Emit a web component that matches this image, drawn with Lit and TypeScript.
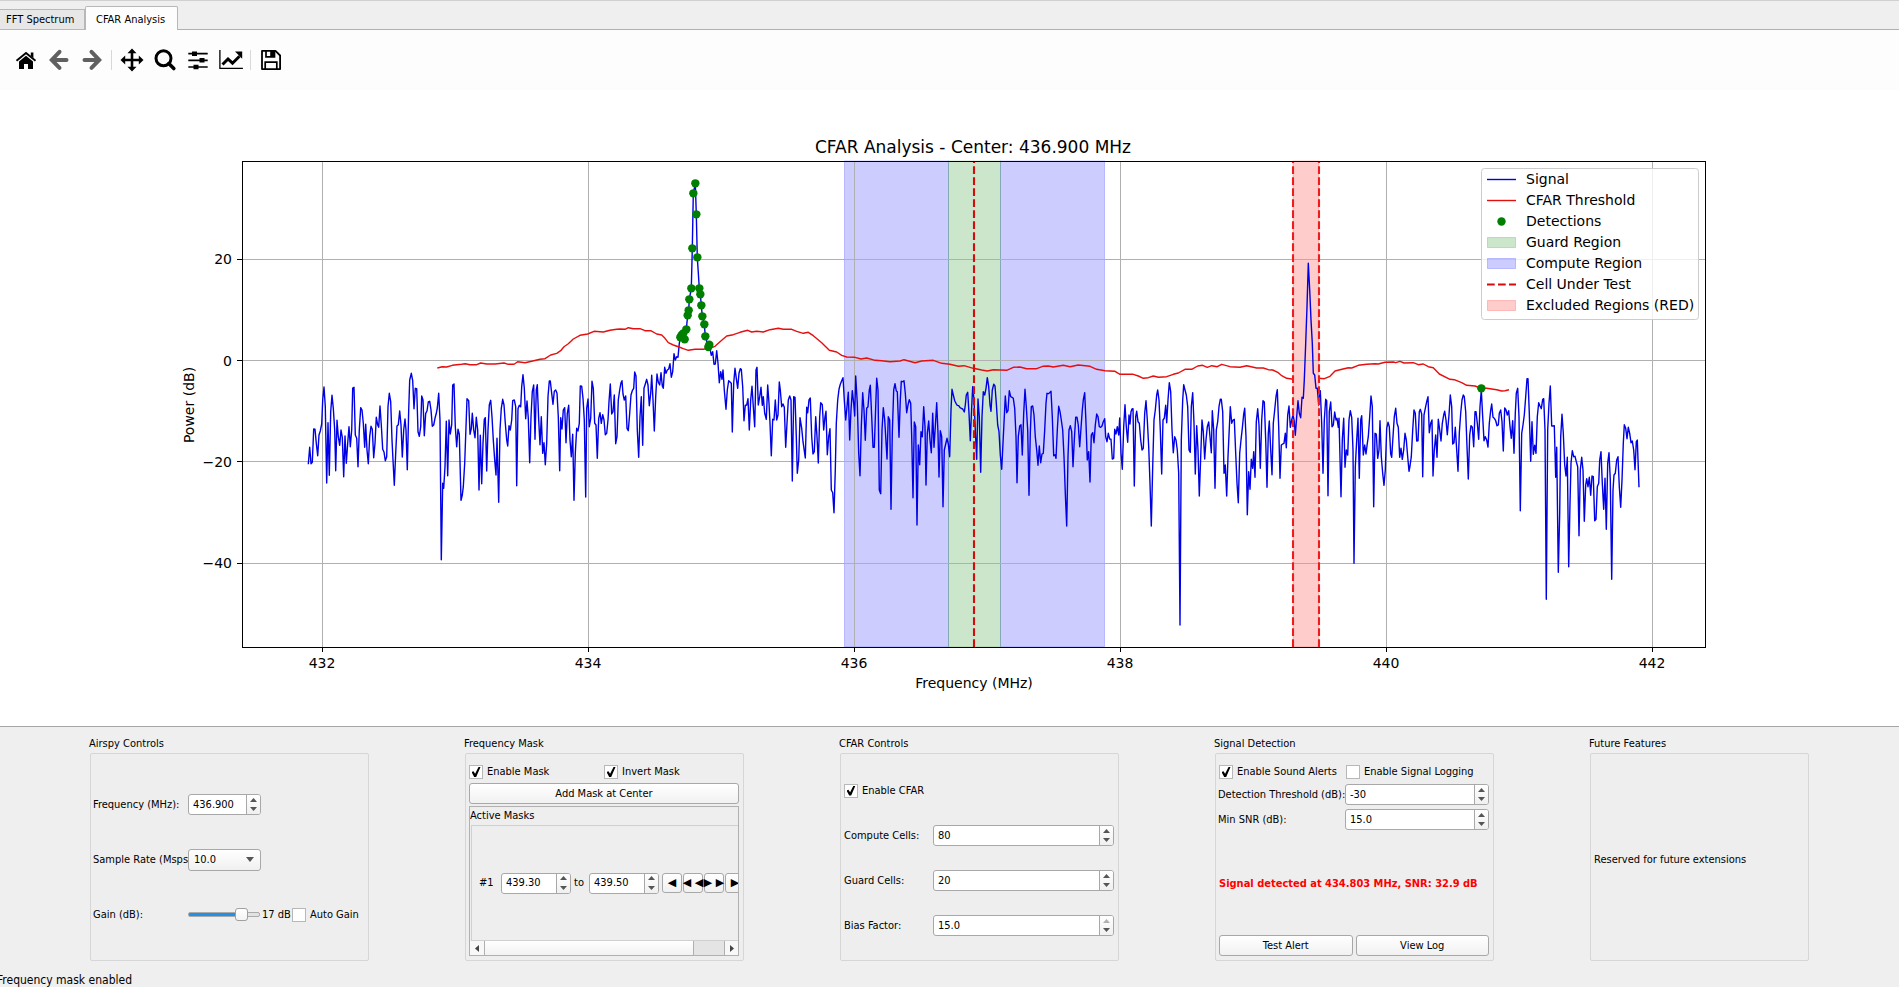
import { LitElement, html, svg, css, nothing } from "lit";
import { customElement, state } from "lit/decorators.js";

/* Traces are stored in sections; each section has an origin and points in thirds of a pixel. */
type Section = { x: number; y: number; pts: string };

const SIGNAL: Section[] = [
  { x: 290, y: 330, pts: "55,403 59,352 63,401 67,397 71,297 75,298 79,340 83,377 87,315 91,303 95,282 98,210 102,171 106,230 110,459 114,278 118,436 122,245 126,196 130,235 134,300 137,422 141,271 145,320 149,346 153,300 157,322 161,440 165,318 169,400 173,340 177,290 181,350 185,300 188,174 192,172 196,315 200,325 204,410 208,300 212,233 216,240 220,280 224,352 227,283 231,360 235,401 239,320 243,289 247,298 251,383 255,340 259,262 263,285 266,292 270,228 274,285 278,358 282,366 286,392 290,380 294,230 298,190 302,215 306,330 309,390 313,466 317,370 321,288 325,284 329,243 333,285 337,381 341,300 345,267 348,300 352,419 356,240 359,150 364,130 368,152 372,236 376,175 380,176 384,305 388,319 392,290 395,198 399,210 403,317 407,250 411,243 415,216 419,214 423,240 427,289 431,285 435,265 439,250 442,234 446,190 450,270 454,689 458,460 461,475 465,410 469,274 473,437 477,270 481,312 485,285 488,165 492,162 496,290 500,350 504,298 508,313 513,511 517,495 520,470 524,400 528,290 531,206 536,212 540,313 544,296 547,250 551,300 555,323 559,262 563,300 567,480 571,316 575,461 579,340 583,268 586,263 590,423 594,300 598,225 602,211 606,260 610,330 614,390 618,435 621,325 626,517 630,300 634,235 638,208 642,225 646,280 650,330 653,348 657,287 661,300 665,270 668,212 673,210 677,230 680,467 684,236 688,226 692,230 695,170 699,134 703,175 707,266 711,213 715,265 719,398 723,260 727,185 731,165 735,328 739,180 742,164 746,270 750,344 754,260 758,370 762,338 766,404 770,340 774,200 778,153 781,153 785,190 789,223 793,184 797,180 801,190 805,260 809,422 812,263 816,297 820,240 824,233 828,338 832,250 836,226 840,330 844,380 848,313 852,511 856,370 860,295 864,303 868,280 871,168 875,169 879,205 883,270 887,501 890,235 894,207 898,290 902,265 906,154 910,175 914,280 918,285 922,385 926,265 930,248 934,280 938,254 942,270 946,314 950,310 954,270 957,215 961,162 965,252 969,245 973,195 977,341 981,320 985,210 989,180" },
  { x: 620, y: 170, pts: "3,638 6,632 9,672 13,690 17,678 21,775 25,782 29,730 33,675 37,662 41,655 44,606 48,618 52,780 56,862 60,740 64,680 68,826 72,655 76,642 80,628 84,645 88,707 92,670 95,616 99,690 103,783 107,680 111,612 115,637 119,645 123,608 127,648 130,655 134,592 138,610 142,600 146,597 150,581 154,622 158,605 162,551 166,570 170,560 174,562 178,520 182,500 186,490 190,495 194,508 199,478 203,436 206,421 208,388 214,355 217,235 220,70 226,40 229,133 232,262 238,355 241,373 244,406 247,439 253,463 256,499 265,530 270,535 274,556 278,545 282,583 286,582 290,542 294,580 298,638 302,605 306,628 309,600 313,660 318,718 322,660 326,632 330,636 334,640 337,786 341,640 345,595 349,625 353,655 357,610 361,596 364,598 368,650 372,752 376,706 380,705 384,686 388,780 392,690 396,649 400,710 404,770 408,600 411,592 415,705 419,680 423,652 427,706 430,680 434,730 439,748 443,645 447,700 450,760 454,857 458,748 462,750 466,690 470,750 474,735 478,636 481,660 485,710 489,702 493,712 497,832 501,760 505,690 509,678 513,690 517,933 521,680 525,682 529,800 532,910 536,870 540,743 545,775 549,815 556,864 560,712 563,728 567,690 571,684 575,800 579,852 583,845 587,740 591,800 595,879 599,740 602,698 607,704 611,780 615,740 618,724 622,854 626,800 630,776 634,960 638,968 642,1028 646,900 649,760 653,690 657,658" },
  { x: 840, y: 340, pts: "1,133 5,122 9,113 13,180 17,240 21,200 25,157 29,300 33,210 37,152 41,190 44,228 47,108 52,190 56,340 60,407 64,260 68,158 72,210 76,301 80,205 84,200 88,150 91,136 95,230 99,322 103,322 107,200 110,115 114,150 118,450 122,461 126,270 130,203 134,240 137,290 141,357 145,230 149,240 153,508 157,280 161,150 165,131 169,153 172,155 177,292 181,180 184,124 188,125 192,122 196,160 200,218 204,195 208,179 212,190 215,290 219,473 223,246 227,260 231,555 235,315 239,374 243,275 247,290 251,200 255,260 258,435 262,280 266,243 270,300 274,338 278,220 282,322 286,260 290,188 294,280 297,411 301,272 305,290 309,500 313,330 317,312 321,295 325,312 329,350 333,210 336,148 340,165 344,182 348,190 352,196 356,197 360,203 364,205 368,207 373,216 376,195 379,165 383,157 387,220 391,302 395,200 398,140 402,180 406,270 410,358 414,177 418,230 422,397 426,230 430,155 434,165 438,145 442,113 446,140 450,195 453,214 457,150 461,133 465,138 469,190 473,255 477,275 481,345 485,388 489,310 493,230 496,168 500,218 504,212 508,152 512,170 516,172 520,175 524,205 528,290 531,428 535,290 539,258 543,254 547,345 551,220 555,148 559,200 563,270 567,466 571,280 574,200 578,198 582,225 586,290 590,330 594,376 598,318 602,368 606,342 610,340 614,270 618,190 621,160 625,161 629,158 633,154 637,230 641,347 645,344 648,355 652,270 656,199 660,215 664,240 668,270 672,350 676,460 680,558 684,350 687,270 691,257 695,275 699,380 703,300 707,232 711,232 715,255 719,320 723,265 727,210 730,180 734,158 738,250 742,360 746,335 750,426 754,285 758,278 762,308 766,255 770,222 774,230 778,260 782,262 786,258 790,245 794,236 797,290 801,305 805,280 809,297 813,298 817,357 821,355 824,268 828,282 832,260 836,285 839,234 843,340 847,388 851,260 855,194 859,260 863,307 867,225" },
  { x: 1130, y: 340, pts: "0,252 3,215 6,207 9,206 13,438 17,230 20,214 24,245 28,250 32,300 36,330 40,325 44,220 48,182 52,240 56,320 60,430 64,558 68,380 72,240 76,210 80,165 83,150 87,180 91,270 95,402 99,240 103,235 107,196 110,248 114,180 118,128 122,155 126,270 130,338 134,290 138,300 142,330 146,400 150,855 154,300 158,180 161,134 165,150 169,165 173,200 177,330 181,337 184,200 188,158 192,250 196,402 200,257 204,330 208,468 212,350 216,240 220,275 224,357 228,300 232,260 236,246 240,290 244,338 247,212 251,270 255,445 259,270 263,245 267,200 271,178 274,178 278,215 282,400 286,375 290,468 294,350 298,265 301,200 305,250 309,240 313,238 317,340 321,430 325,488 329,340 333,300 337,265 341,222 344,205 348,290 352,524 356,395 360,448 364,358 368,385 371,335 375,412 379,245 383,206 387,255 391,385 395,240 399,182 403,186 407,300 411,442 415,280 418,243 422,330 426,404 430,250 434,210 438,170 442,149 446,260 450,415 454,315 458,312 462,310 466,280 469,323 473,225 477,198 481,262 485,240 489,225 493,245 496,286 500,230 504,182 508,220 512,233 516,172 520,175 523,120 527,10 531,-100 535,-230 539,-150 543,-60 547,10 550,100 554,105 558,145 562,145 566,195 571,152 575,250 579,400 583,240 587,178 590,182 594,467 598,215 602,186 606,260 610,255 614,216 618,240 621,235 625,262 627,235 633,470 637,300 641,235 645,382 649,330 653,345 657,240 661,212 665,232 669,330 672,670 676,380 680,300 684,235 688,415 692,240 695,227 700,345 704,315 708,342 712,310 715,290 719,230 723,168 727,200 731,500 735,280 739,282 743,355 747,330 750,242 754,350 758,400 762,436 766,390 770,265 774,247 778,260 782,342 785,352 789,290 793,230 797,205 801,250 805,262 809,352 813,325 817,358 821,330 825,280 829,300 833,350 837,394 840,378 844,350 848,270 852,210 856,220 860,303 864,302" },
  { x: 1400, y: 340, pts: "58,215 61,208 65,222 68,410 72,225 76,205 80,185 84,170 88,278 92,250 96,240 99,408 103,330 107,285 111,352 115,238 119,270 123,303 127,250 131,225 134,214 138,240 142,284 147,225 151,165 155,200 158,312 162,308 166,262 170,330 174,394 178,280 182,220 186,180 190,165 193,170 197,215 201,320 205,417 209,285 213,257 217,262 221,320 225,215 228,215 232,250 236,298 240,200 244,150 248,230 252,302 256,290 260,300 264,321 268,250 272,210 275,192 279,232 283,235 287,242 291,257 295,255 298,220 302,210 306,245 310,333 314,204 318,210 322,225 326,212 330,260 334,295 338,242 342,340 346,220 349,160 353,145 357,230 361,512 365,280 369,255 373,225 377,170 381,116 384,116 388,220 392,364 396,245 400,343 404,316 408,340 412,230 416,188 420,198 424,206 428,178 431,176 435,270 439,778 443,270 447,190 451,138 455,258 459,258 463,257 467,412 470,322 475,697 479,520 482,290 486,223 490,280 494,375 498,408 502,352 506,680 510,490 513,370 517,332 521,350 525,349 529,365 533,380 537,587 541,390 545,352 549,390 553,544 557,435 560,416 564,440 568,412 572,466 576,408 580,410 584,542 588,538 592,440 596,430 599,360 603,335 607,430 611,508 615,415 619,568 623,370 627,338 631,420 635,718 639,450 642,405 646,400 650,360 654,350 658,440 662,502 666,420 670,310 673,254 677,265 681,296 685,262 689,280 693,308 697,303 701,330 705,389 709,305 712,300 717,442" },
];

const THRESHOLD_LOW: Section[] = [
  { x: 290, y: 330, pts: "442,114 457,110 470,111 487,106 500,104 515,103 526,101 540,104 560,104 572,99 590,102 615,102 642,99 655,103 672,103 683,95 705,98 725,94 750,88 765,86 782,75 800,70 812,62 822,50 835,41 850,27 870,16 893,12 912,4 940,6 960,1 980,-2" },
  { x: 620, y: 170, pts: "0,477 15,478 25,473 40,476 60,476 75,482 92,482 110,492 125,495 135,505 145,518 160,525 177,531 190,536 205,541 225,538 250,538 268,535 285,529 300,515 320,498 340,494 360,487 383,481 395,486 410,484 430,486 450,479 475,475 490,478 515,478 530,484 550,490 565,487 580,497 605,518 628,541 650,546" },
  { x: 840, y: 340, pts: "5,46 20,51 45,52 63,57 80,54 105,61 125,62 150,65 180,63 192,59 225,68 245,63 280,61 305,70 330,73 355,79 372,77 400,85 425,90 442,93 460,89 500,91 520,82 540,81 560,86 590,86 608,79 625,78 640,81 670,76 690,80 715,75 750,79 770,88 795,92 825,94 840,103 865,103" },
  { x: 1130, y: 340, pts: "10,103 25,108 40,115 55,113 70,108 85,112 110,110 130,103 145,99 165,88 185,88 203,78 218,76 232,82 245,77 262,80 275,73 300,80 330,82 350,77 380,84 400,84 415,89 428,90 445,98 455,107 470,115 490,118" },
];

const THRESHOLD_HIGH: Section[] = [
  { x: 1130, y: 340, pts: "567,115 583,116 600,109 615,93 630,89 655,83 665,84 685,76 710,73 735,71 745,72 765,67 790,66 797,68" },
  { x: 1400, y: 340, pts: "0,64 12,69 40,68 55,74 70,72 85,80 100,83 118,102 150,118 163,119 185,128 200,136 225,138 244,145 260,145 290,149 305,153 315,152 327,149" },
];

const DETECTIONS: Section[] = [
  { x: 620, y: 170, pts: "226,40 220,70 229,133 217,235 232,262 214,355 238,355 241,373 208,388 244,406 206,421 203,436 247,439 253,463 199,478 256,499 181,502 185,495 190,490 194,508 268,524 265,531" },
  { x: 1400, y: 340, pts: "244,145" },
];

const points = (sections: Section[]): [number, number][] =>
  sections.flatMap((s) =>
    s.pts.split(" ").map((p): [number, number] => {
      const [x, y] = p.split(",").map(Number);
      return [s.x + x / 3, s.y + y / 3];
    })
  );

const line = (sections: Section[]) =>
  points(sections).map(([x, y]) => `${x.toFixed(1)},${y.toFixed(1)}`).join(" ");

const AX = { left: 242, right: 1706, top: 161, bottom: 647 };
const xOf = (mhz: number) => 322 + (mhz - 432) * 133;
const yOf = (db: number) => 360.5 - db * 5.07;

@customElement("cfar-plot")
export class CfarPlot extends LitElement {
  static styles = css`
    :host { display: block; background: #fff; }
    svg { display: block; width: 100%; height: auto; }
    text { font-family: "DejaVu Sans", sans-serif; font-size: 14px; fill: #000; }
    .title { font-size: 17px; }
    .mid { text-anchor: middle; }
    .end { text-anchor: end; }
    .grid { stroke: #b0b0b0; stroke-width: 1; shape-rendering: crispEdges; }
    .tick, .frame { stroke: #000; stroke-width: 1; fill: none; shape-rendering: crispEdges; }
    .signal { fill: none; stroke: #0000e6; stroke-width: 1.4; stroke-linejoin: round; }
    .threshold { fill: none; stroke: #e60f0f; stroke-width: 1.4; stroke-linejoin: round; }
    .dot { fill: #008000; }
    .compute { fill: #00f; fill-opacity: 0.2; stroke: #00f; stroke-opacity: 0.2; }
    .guard { fill: #008000; fill-opacity: 0.2; stroke: #008000; stroke-opacity: 0.2; }
    .excluded { fill: #f00; fill-opacity: 0.2; stroke: #f00; stroke-opacity: 0.2; }
    .cut { stroke: #d40c0c; stroke-width: 2.1; stroke-dasharray: 7.7 3.3; }
    .bound { stroke: #f01c1c; stroke-width: 2.1; stroke-dasharray: 7.7 3.3; }
    .legend { fill: #fff; fill-opacity: 0.8; stroke: #ccc; }
  `;

  private legendRow(i: number, label: string) {
    const y = 179.5 + i * 21;
    const keys = [
      svg`<line class="signal" x1="1487" x2="1516" y1=${y} y2=${y} />`,
      svg`<line class="threshold" x1="1487" x2="1516" y1=${y} y2=${y} />`,
      svg`<circle class="dot" cx="1501.5" cy=${y} r="4.2" />`,
      svg`<rect class="guard" x="1487.5" y=${y - 5} width="28" height="10" />`,
      svg`<rect class="compute" x="1487.5" y=${y - 5} width="28" height="10" />`,
      svg`<line class="cut" x1="1487" x2="1516" y1=${y} y2=${y} />`,
      svg`<rect class="excluded" x="1487.5" y=${y - 5} width="28" height="10" />`,
    ];
    return svg`${keys[i]}<text x="1526" y=${y + 4}>${label}</text>`;
  }

  render() {
    const h = AX.bottom - AX.top;
    const labels = ["Signal", "CFAR Threshold", "Detections", "Guard Region", "Compute Region", "Cell Under Test", "Excluded Regions (RED)"];
    return html`
      <svg viewBox="0 90 1899 636" role="img" aria-label="CFAR Analysis - Center: 436.900 MHz">
        <rect class="compute" x="844.5" y=${AX.top} width="104" height=${h} />
        <rect class="compute" x="1000.5" y=${AX.top} width="104" height=${h} />
        <rect class="guard" x="948.5" y=${AX.top} width="52" height=${h} />
        <rect class="excluded" x="1293" y=${AX.top} width="26" height=${h} />
        ${[432, 434, 436, 438, 440, 442].map((f) => svg`
          <line class="grid" x1=${xOf(f)} x2=${xOf(f)} y1=${AX.top} y2=${AX.bottom} />
          <line class="tick" x1=${xOf(f)} x2=${xOf(f)} y1=${AX.bottom} y2=${AX.bottom + 5} />
          <text class="mid" x=${xOf(f)} y="668">${f}</text>`)}
        ${[20, 0, -20, -40].map((d) => svg`
          <line class="grid" x1=${AX.left} x2=${AX.right} y1=${yOf(d)} y2=${yOf(d)} />
          <line class="tick" x1=${AX.left - 5} x2=${AX.left} y1=${yOf(d)} y2=${yOf(d)} />
          <text class="end" x="232" y=${yOf(d) + 5}>${d < 0 ? `−${-d}` : d}</text>`)}
        <polyline class="signal" points=${line(SIGNAL)} />
        <polyline class="threshold" points=${line(THRESHOLD_LOW)} />
        <polyline class="threshold" points=${line(THRESHOLD_HIGH)} />
        ${points(DETECTIONS).map(([x, y]) => svg`<circle class="dot" cx=${x} cy=${y} r="4.2" />`)}
        <line class="cut" x1="974" x2="974" y1=${AX.bottom} y2=${AX.top} />
        <line class="bound" x1="1293" x2="1293" y1=${AX.bottom} y2=${AX.top} />
        <line class="bound" x1="1319" x2="1319" y1=${AX.bottom} y2=${AX.top} />
        <rect class="frame" x="242.5" y="161.5" width="1463" height="486" />
        <text class="title mid" x="973" y="153">CFAR Analysis - Center: 436.900 MHz</text>
        <text class="mid" x="974" y="688">Frequency (MHz)</text>
        <text class="mid" transform="translate(194 405) rotate(-90)">Power (dB)</text>
        <rect class="legend" x="1481.5" y="168.5" width="217" height="151" rx="3" />
        ${labels.map((l, i) => this.legendRow(i, l))}
      </svg>
    `;
  }
}

const icons = {
  Home: svg`<path d="M2.5 12.8 12 5l9.500 7.800" fill="none" stroke="#000" stroke-width="1.900"/><path d="M16.800 4.500h2.600v5.500l-2.600-2zM5 13.500l7-5.800 7 5.800V21h-5v-5h-4v5H5z"/>`,
  Back: svg`<path d="M12.500 3.800 4.800 12l7.700 7.800M5.500 12h14" fill="none" stroke="#606060" stroke-width="4" stroke-linecap="round"/>`,
  Forward: svg`<path d="M11.500 3.800l7.700 8.200-7.700 7.800M18.500 12h-14" fill="none" stroke="#606060" stroke-width="4" stroke-linecap="round"/>`,
  Pan: svg`<path d="M12 3v18M3 12h18" stroke="#000" stroke-width="2.600"/><path d="M12 .5l4.500 4.700h-9zM12 23.500l4.500-4.700h-9zM.5 12l4.700-4.500v9zM23.500 12l-4.700-4.500v9z"/>`,
  Zoom: svg`<circle cx="10.500" cy="10.300" r="7.500" fill="none" stroke="#000" stroke-width="3"/><path d="M15.800 15.600l5 5" stroke="#000" stroke-width="3.600" stroke-linecap="round"/>`,
  Subplots: svg`<path d="M2.300 5.700h19.400M2.300 12.300h19.400M2.300 19h19.400" stroke="#000" stroke-width="1.700"/><path d="M6 3.500h5v4.400H6zM13.500 10.100h5v4.400h-5zM7.500 16.800h5v4.400h-5z"/>`,
  Customize: svg`<path d="M.9 2v18.400h23" fill="none" stroke="#000" stroke-width="1.300"/><path d="M3.500 16.500l5.500-5.500 4.500 4.200 7-7" fill="none" stroke="#000" stroke-width="3"/><path d="M16 3.600h7.200v7.200z"/>`,
  Save: svg`<path d="M3 2.900h13.500l4.600 4.600v13.600H3z" fill="none" stroke="#000" stroke-width="1.800" stroke-linejoin="round"/><path d="M7 3v5.800h8.500V3M6.200 21v-6.800h11.600V21" fill="none" stroke="#000" stroke-width="1.700"/><path d="M11.200 3h4v5h-4z"/>`,
};

@customElement("app-root")
export class AppRoot extends LitElement {
  @state() private gain = 17;

  static styles = css`
    :host {
      display: flex; flex-direction: column; min-height: 100vh; background: #efefef; color: #000;
      font: 11px/14px "DejaVu Sans Condensed", "Noto Sans", sans-serif; overflow: hidden;
    }
    * { box-sizing: border-box; }
    button, input, select { font: inherit; color: inherit; margin: 0; }
    .tabs { display: flex; align-items: flex-end; height: 30px; border-top: 1px solid #d0d0d0; box-shadow: inset 0 -1px #b0b0b0; }
    .tab { height: 21px; width: 85px; padding: 1px 6px 0; text-align: left; white-space: nowrap; border: 1px solid #b8b8b8; border-left: 0; background: #e7e7e7; }
    .tab.active { height: 24px; width: 93px; padding: 2px 10px 0; background: #fdfdfd; border-left: 1px solid #b8b8b8; border-bottom: 0; border-radius: 2px 2px 0 0; }
    .toolbar { display: flex; align-items: center; height: 60px; padding-left: 9px; background: #fdfdfd; }
    .tool { width: 33px; height: 32px; padding: 0; border: 0; background: none; display: grid; place-items: center; }
    .tool svg { width: 24px; height: 24px; }
    .sep { width: 7px; height: 20px; background: linear-gradient(#d8d8d8, #d8d8d8) center / 1px 100% no-repeat; }
    .panel { flex: 1; border-top: 1px solid #a6a6a6; display: grid; grid-template-columns: repeat(5, 1fr); padding: 10px 12px 0; align-items: start; }
    .group { padding-left: 77px; width: 357px; }
    .group.narrow { width: 297px; }
    h2, h3 { font: inherit; margin: 0; }
    .frame { height: 208px; margin: 2px 0 0 1px; padding: 0 3px; border: 1px solid #d6d6d6; border-radius: 2px; background: #eee; display: flex; flex-direction: column; }
    .airspy { padding: 40px 0 0 2px; gap: 34px; }
    .mask { padding: 11px 4px 4px 3px; gap: 2px; }
    .cfar { padding: 26px 4px 0 3px; gap: 24px; }
    .detect { padding: 11px 4px 4px 2px; gap: 4px; }
    .future { justify-content: center; padding-top: 6px; }
    .row { display: flex; align-items: center; height: 21px; flex: none; }
    .row > .name { flex: none; overflow: hidden; white-space: nowrap; }
    .airspy .name { width: 95px; }
    .cfar .name { width: 89px; }
    .detect .name { width: 127px; }
    .check { display: flex; align-items: center; gap: 4px; white-space: nowrap; }
    .check input { appearance: none; width: 14px; height: 14px; flex: none; border: 1px solid #b8b8b8; background: #fff; display: grid; place-items: center; }
    .check input:checked::before { content: ""; width: 9px; height: 10px; background: #000; clip-path: polygon(0 50%, 22% 42%, 40% 68%, 78% 0, 100% 0, 52% 100%, 30% 100%); }
    .pair { display: grid; grid-template-columns: 1fr 1fr; height: 14px; flex: none; margin-bottom: 2px; }
    .detect .pair { grid-template-columns: 127px 1fr; padding-left: 1px; margin-bottom: 1px; }
    .spin { display: flex; height: 21px; border: 1px solid #a8a8a8; border-radius: 3px; background: #fff; overflow: hidden; }
    .spin.wide { flex: 1; }
    .spin input { flex: 1; min-width: 0; width: 0; border: 0; background: none; padding: 0 4px; outline: 0; }
    .arrows { width: 14px; display: flex; flex-direction: column; border-left: 1px solid #a8a8a8; background: linear-gradient(#fff, #f0f0f0); }
    .arrows button { flex: 1; border: 0; padding: 0; background: none; display: grid; place-items: center; color: #555; }
    .arrows button:disabled { color: #b0b0b0; }
    .arrows svg { width: 7px; height: 4px; fill: currentColor; }
    .w70 { width: 70px; }
    .w73 { width: 73px; }
    .combo { display: grid; align-items: center; }
    .combo select { grid-area: 1 / 1; appearance: none; width: 73px; height: 22px; padding: 0 5px; border: 1px solid #a8a8a8; border-radius: 3px; background: linear-gradient(#fff, #f0f0f0); }
    .combo svg { grid-area: 1 / 1; justify-self: end; margin-right: 7px; width: 8px; height: 5px; fill: #555; pointer-events: none; }
    .slider { appearance: none; width: 72px; height: 14px; background: none; }
    .slider::-webkit-slider-runnable-track { height: 5px; border: 1px solid #aaa; border-radius: 2px; background: linear-gradient(#2390e8, #2390e8) left / var(--fill) 100% no-repeat #e2e2e2; box-shadow: none; }
    .slider::-webkit-slider-thumb { appearance: none; width: 13px; height: 13px; margin-top: -5px; border: 1px solid #a0a0a0; border-radius: 3px; background: linear-gradient(#fff, #f3f3f3); }
    .gain { width: 32px; padding-left: 2px; white-space: nowrap; }
    .push { flex: 1; height: 21px; padding: 0; border: 1px solid #a8a8a8; border-radius: 3px; background: linear-gradient(#fff, #f1f1f1); }
    .mask > .push { flex: none; }
    .list { flex: 1; min-height: 0; border: 1px solid #b0b0b0; overflow: hidden; display: flex; flex-direction: column; }
    .list h3 { height: 18px; line-height: 17px; }
    .masks { flex: 1; margin-left: 1px; padding-left: 7px; border: 1px solid #d0d0d0; border-right: 0; display: flex; align-items: center; overflow: hidden; }
    .masks > * { flex: none; }
    .num { width: 22px; }
    .to { width: 18px; padding-left: 3px; }
    .nudge { width: 20px; height: 20px; margin-left: 1px; padding: 0; border: 1px solid #a8a8a8; border-radius: 3px; background: linear-gradient(#fff, #f1f1f1); display: flex; justify-content: center; align-items: center; white-space: nowrap; font-family: "DejaVu Sans", sans-serif; }
    .w70 + .nudge { margin-left: 3px; }
    .scroll { height: 14px; display: flex; background: #e4e4e4; }
    .scroll button { width: 14px; border: 0; padding: 0; background: #f8f8f8; display: grid; place-items: center; }
    .scroll svg { width: 4px; height: 7px; fill: #444; }
    .thumb { flex: 1; margin-right: 30px; border: solid #b0b0b0; border-width: 0 1px; background: linear-gradient(#fff, #f2f2f2); }
    .scroll button:last-child { border-left: 1px solid #b0b0b0; }
    .alert { flex: 1; display: flex; align-items: center; padding: 2px 0 0 1px; color: #f00; font-weight: bold; white-space: nowrap; }
    .buttons { display: flex; gap: 3px; padding-left: 1px; }
    .status { height: 16px; margin-left: -3px; font-size: 12px; line-height: 18px; }
  `;

  private check(label: string, checked: boolean) {
    return html`<label class="check"><input type="checkbox" .checked=${checked} />${label}</label>`;
  }

  private spin(id: string, value: string, size: string, label?: string, atMax = false) {
    return html`
      <div class="spin ${size}">
        <input id=${id} type="text" inputmode="decimal" .value=${value} aria-label=${label ?? nothing} />
        <div class="arrows">
          <button aria-label="Increase" ?disabled=${atMax}><svg viewBox="0 0 7 4"><path d="M0 4 3.500 0 7 4z" /></svg></button>
          <button aria-label="Decrease"><svg viewBox="0 0 7 4"><path d="M0 0h7L3.500 4z" /></svg></button>
        </div>
      </div>
    `;
  }

  private field(id: string, label: string, value: string, size: string, atMax = false) {
    return html`<div class="row"><label class="name" for=${id}>${label}</label>${this.spin(id, value, size, undefined, atMax)}</div>`;
  }

  private tool(name: keyof typeof icons) {
    return html`<button class="tool" aria-label=${name}><svg viewBox="0 0 24 24">${icons[name]}</svg></button>`;
  }

  render() {
    return html`
      <div class="tabs" role="tablist">
        <button class="tab" role="tab">FFT Spectrum</button>
        <button class="tab active" role="tab" aria-selected="true">CFAR Analysis</button>
      </div>
      <div class="toolbar" role="toolbar">
        ${this.tool("Home")}${this.tool("Back")}${this.tool("Forward")}
        <span class="sep"></span>
        ${this.tool("Pan")}${this.tool("Zoom")}${this.tool("Subplots")}${this.tool("Customize")}
        <span class="sep"></span>
        ${this.tool("Save")}
      </div>
      <cfar-plot></cfar-plot>
      <div class="panel">
        <section class="group">
          <h2>Airspy Controls</h2>
          <div class="frame airspy">
            ${this.field("freq", "Frequency (MHz):", "436.900", "w73")}
            <div class="row">
              <label class="name" for="rate">Sample Rate (Msps):</label>
              <div class="combo">
                <select id="rate"><option>10.0</option><option>2.5</option></select>
                <svg viewBox="0 0 8 5"><path d="M0 0h8L4 5z" /></svg>
              </div>
            </div>
            <div class="row">
              <label class="name" for="gain">Gain (dB):</label>
              <input class="slider" id="gain" type="range" min="0" max="21" .value=${String(this.gain)}
                style="--fill: ${(this.gain / 21) * 100}%"
                @input=${(e: Event) => (this.gain = Number((e.target as HTMLInputElement).value))} />
              <span class="gain">${this.gain} dB</span>
              ${this.check("Auto Gain", false)}
            </div>
          </div>
        </section>
        <section class="group">
          <h2>Frequency Mask</h2>
          <div class="frame mask">
            <div class="pair">${this.check("Enable Mask", true)}${this.check("Invert Mask", true)}</div>
            <button class="push">Add Mask at Center</button>
            <div class="list">
              <h3>Active Masks</h3>
              <div class="masks">
                <span class="num">#1</span>
                ${this.spin("from", "439.30", "w70", "Mask 1 start")}
                <span class="to">to</span>
                ${this.spin("until", "439.50", "w70", "Mask 1 end")}
                <button class="nudge">◀</button><button class="nudge">◀&nbsp;◀</button><button class="nudge">▶&nbsp;▶</button><button class="nudge">▶</button>
              </div>
              <div class="scroll">
                <button aria-label="Scroll left"><svg viewBox="0 0 4 7"><path d="M4 0v7L0 3.500z" /></svg></button>
                <div class="thumb"></div>
                <button aria-label="Scroll right"><svg viewBox="0 0 4 7"><path d="M0 0v7l4-3.500z" /></svg></button>
              </div>
            </div>
          </div>
        </section>
        <section class="group">
          <h2>CFAR Controls</h2>
          <div class="frame cfar">
            <div class="row">${this.check("Enable CFAR", true)}</div>
            ${this.field("compute", "Compute Cells:", "80", "wide")}
            ${this.field("guard", "Guard Cells:", "20", "wide")}
            ${this.field("bias", "Bias Factor:", "15.0", "wide", true)}
          </div>
        </section>
        <section class="group">
          <h2>Signal Detection</h2>
          <div class="frame detect">
            <div class="pair">${this.check("Enable Sound Alerts", true)}${this.check("Enable Signal Logging", false)}</div>
            ${this.field("detection", "Detection Threshold (dB):", "-30", "wide")}
            ${this.field("snr", "Min SNR (dB):", "15.0", "wide")}
            <div class="alert" role="status">Signal detected at 434.803 MHz, SNR: 32.9 dB</div>
            <div class="buttons"><button class="push">Test Alert</button><button class="push">View Log</button></div>
          </div>
        </section>
        <section class="group narrow">
          <h2>Future Features</h2>
          <div class="frame future">Reserved for future extensions</div>
        </section>
      </div>
      <div class="status">Frequency mask enabled</div>
    `;
  }
}
